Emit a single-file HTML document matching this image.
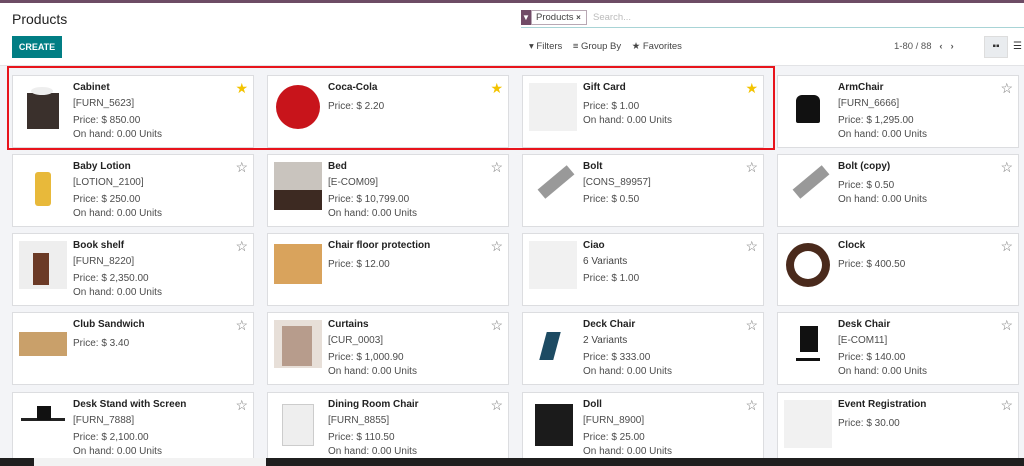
<!DOCTYPE html><html><head><style>
*{margin:0;padding:0;box-sizing:border-box}
body{width:1024px;height:466px;overflow:hidden;background:#f3f4f7;font-family:"Liberation Sans",sans-serif;position:relative;color:#4c4c4c}
.top{position:absolute;left:0;top:0;width:1024px;height:3px;background:#6d4c65}
.hdr{position:absolute;left:0;top:3px;width:1024px;height:63px;background:#fff;border-bottom:1px solid #e2e3e6}
.c{position:absolute;width:242px;height:73px;background:#fff;border:1px solid #dcdde0}
.c .im{position:absolute;left:6px;top:7px;width:48px;height:48px}
.c div.t{position:absolute;left:60px;font-size:10px;white-space:nowrap;line-height:12px}
.c .n{font-weight:bold;color:#222}
.c .v{color:#444}
.st{position:absolute;right:5px;top:5px;font-size:14px;line-height:14px;color:#777}
.st.f{color:#f3c300}
.ph{background:#f1f1f1}
</style></head><body>
<div class="top"></div>
<div class="hdr">
<div style="position:absolute;left:12px;top:8px;font-size:14px;color:#222">Products</div>
<div style="position:absolute;left:12px;top:33px;width:50px;height:22px;background:#017e84;color:#fff;font-size:9px;font-weight:bold;text-align:center;line-height:22px">CREATE</div>
<div style="position:absolute;left:521px;top:7px;width:10px;height:15px;background:#714b67;color:#fff;font-size:8px;text-align:center;line-height:15px">▼</div>
<div style="position:absolute;left:531px;top:7px;width:56px;height:15px;border:1px solid #b8a8b4;font-size:9.5px;line-height:13px;padding-left:4px;color:#444;white-space:nowrap">Products <b style="font-size:8px">×</b></div>
<div style="position:absolute;left:593px;top:9px;font-size:9.5px;color:#bbb">Search...</div>
<div style="position:absolute;left:521px;top:24px;width:503px;height:1px;background:#a8d4d6"></div>
<div style="position:absolute;left:529px;top:38px;font-size:9.5px;color:#444">▾ Filters &nbsp;&nbsp; ≡ Group By &nbsp;&nbsp; ★ Favorites</div>
<div style="position:absolute;left:894px;top:38px;font-size:9.5px;color:#555">1-80 / 88 &nbsp;&nbsp;<b>‹ &nbsp; ›</b></div>
<div style="position:absolute;left:984px;top:33px;width:24px;height:22px;background:#e9ecef;border:1px solid #ddd;font-size:10px;text-align:center;line-height:20px;color:#333">▪▪</div>
<div style="position:absolute;left:1013px;top:38px;font-size:10px;color:#333">☰</div>
</div>

<!-- row 1 -->
<div class="c" style="left:12px;top:75px"><div class="im"><div style="position:absolute;left:8px;top:10px;width:32px;height:36px;background:#3a302c"></div><div style="position:absolute;left:12px;top:4px;width:22px;height:8px;background:#eee;border-radius:50%"></div></div><div class="t n" style="top:6px">Cabinet</div><div class="t" style="top:22px">[FURN_5623]</div><div class="t" style="top:39px">Price: $ 850.00</div><div class="t" style="top:53px">On hand: 0.00 Units</div><div class="st f">★</div></div>
<div class="c" style="left:267px;top:75px"><div class="im"><div style="position:absolute;left:2px;top:2px;width:44px;height:44px;border-radius:50%;background:#c8141b"></div></div><div class="t n" style="top:6px">Coca-Cola</div><div class="t" style="top:25px">Price: $ 2.20</div><div class="st f">★</div></div>
<div class="c" style="left:522px;top:75px"><div class="im ph"></div><div class="t n" style="top:6px">Gift Card</div><div class="t" style="top:25px">Price: $ 1.00</div><div class="t" style="top:39px">On hand: 0.00 Units</div><div class="st f">★</div></div>
<div class="c" style="left:777px;top:75px"><div class="im"><div style="position:absolute;left:12px;top:12px;width:24px;height:28px;background:#111;border-radius:6px 6px 2px 2px"></div></div><div class="t n" style="top:6px">ArmChair</div><div class="t" style="top:22px">[FURN_6666]</div><div class="t" style="top:39px">Price: $ 1,295.00</div><div class="t" style="top:53px">On hand: 0.00 Units</div><div class="st">☆</div></div>
<!-- row 2 -->
<div class="c" style="left:12px;top:154px"><div class="im"><div style="position:absolute;left:16px;top:10px;width:16px;height:34px;background:#e8b93a;border-radius:3px"></div></div><div class="t n" style="top:6px">Baby Lotion</div><div class="t" style="top:22px">[LOTION_2100]</div><div class="t" style="top:39px">Price: $ 250.00</div><div class="t" style="top:53px">On hand: 0.00 Units</div><div class="st">☆</div></div>
<div class="c" style="left:267px;top:154px"><div class="im" style="background:#c9c4be"><div style="position:absolute;left:0;top:28px;width:48px;height:20px;background:#3d2a22"></div></div><div class="t n" style="top:6px">Bed</div><div class="t" style="top:22px">[E-COM09]</div><div class="t" style="top:39px">Price: $ 10,799.00</div><div class="t" style="top:53px">On hand: 0.00 Units</div><div class="st">☆</div></div>
<div class="c" style="left:522px;top:154px"><div class="im"><div style="position:absolute;left:8px;top:14px;width:38px;height:12px;background:#999;transform:rotate(-40deg)"></div></div><div class="t n" style="top:6px">Bolt</div><div class="t" style="top:22px">[CONS_89957]</div><div class="t" style="top:39px">Price: $ 0.50</div><div class="st">☆</div></div>
<div class="c" style="left:777px;top:154px"><div class="im"><div style="position:absolute;left:8px;top:14px;width:38px;height:12px;background:#999;transform:rotate(-40deg)"></div></div><div class="t n" style="top:6px">Bolt (copy)</div><div class="t" style="top:25px">Price: $ 0.50</div><div class="t" style="top:39px">On hand: 0.00 Units</div><div class="st">☆</div></div>
<!-- row 3 -->
<div class="c" style="left:12px;top:233px"><div class="im" style="background:#eee"><div style="position:absolute;left:14px;top:12px;width:16px;height:32px;background:#6b3a26"></div></div><div class="t n" style="top:6px">Book shelf</div><div class="t" style="top:22px">[FURN_8220]</div><div class="t" style="top:39px">Price: $ 2,350.00</div><div class="t" style="top:53px">On hand: 0.00 Units</div><div class="st">☆</div></div>
<div class="c" style="left:267px;top:233px"><div class="im" style="background:#d9a35c;top:10px;height:40px"></div><div class="t n" style="top:6px">Chair floor protection</div><div class="t" style="top:25px">Price: $ 12.00</div><div class="st">☆</div></div>
<div class="c" style="left:522px;top:233px"><div class="im ph"></div><div class="t n" style="top:6px">Ciao</div><div class="t v" style="top:22px">6 Variants</div><div class="t" style="top:39px">Price: $ 1.00</div><div class="st">☆</div></div>
<div class="c" style="left:777px;top:233px"><div class="im"><div style="position:absolute;left:2px;top:2px;width:44px;height:44px;border-radius:50%;background:#4a2a1c"></div><div style="position:absolute;left:10px;top:10px;width:28px;height:28px;border-radius:50%;background:#fff"></div></div><div class="t n" style="top:6px">Clock</div><div class="t" style="top:25px">Price: $ 400.50</div><div class="st">☆</div></div>
<!-- row 4 -->
<div class="c" style="left:12px;top:312px"><div class="im"><div style="position:absolute;left:0;top:12px;width:48px;height:24px;background:#c9a06a"></div></div><div class="t n" style="top:6px">Club Sandwich</div><div class="t" style="top:25px">Price: $ 3.40</div><div class="st">☆</div></div>
<div class="c" style="left:267px;top:312px"><div class="im" style="background:#e7dfd8"><div style="position:absolute;left:8px;top:6px;width:30px;height:40px;background:#b79c8c"></div></div><div class="t n" style="top:6px">Curtains</div><div class="t" style="top:22px">[CUR_0003]</div><div class="t" style="top:39px">Price: $ 1,000.90</div><div class="t" style="top:53px">On hand: 0.00 Units</div><div class="st">☆</div></div>
<div class="c" style="left:522px;top:312px"><div class="im"><div style="position:absolute;left:14px;top:12px;width:14px;height:28px;background:#1d4b63;transform:skew(-15deg)"></div></div><div class="t n" style="top:6px">Deck Chair</div><div class="t v" style="top:22px">2 Variants</div><div class="t" style="top:39px">Price: $ 333.00</div><div class="t" style="top:53px">On hand: 0.00 Units</div><div class="st">☆</div></div>
<div class="c" style="left:777px;top:312px"><div class="im"><div style="position:absolute;left:16px;top:6px;width:18px;height:26px;background:#111"></div><div style="position:absolute;left:12px;top:38px;width:24px;height:3px;background:#111"></div></div><div class="t n" style="top:6px">Desk Chair</div><div class="t" style="top:22px">[E-COM11]</div><div class="t" style="top:39px">Price: $ 140.00</div><div class="t" style="top:53px">On hand: 0.00 Units</div><div class="st">☆</div></div>
<!-- row 5 -->
<div class="c" style="left:12px;top:392px"><div class="im"><div style="position:absolute;left:2px;top:18px;width:44px;height:3px;background:#222"></div><div style="position:absolute;left:18px;top:6px;width:14px;height:14px;background:#111"></div></div><div class="t n" style="top:6px">Desk Stand with Screen</div><div class="t" style="top:22px">[FURN_7888]</div><div class="t" style="top:39px">Price: $ 2,100.00</div><div class="t" style="top:53px">On hand: 0.00 Units</div><div class="st">☆</div></div>
<div class="c" style="left:267px;top:392px"><div class="im"><div style="position:absolute;left:8px;top:4px;width:32px;height:42px;background:#eee;border:1px solid #ccc"></div></div><div class="t n" style="top:6px">Dining Room Chair</div><div class="t" style="top:22px">[FURN_8855]</div><div class="t" style="top:39px">Price: $ 110.50</div><div class="t" style="top:53px">On hand: 0.00 Units</div><div class="st">☆</div></div>
<div class="c" style="left:522px;top:392px"><div class="im"><div style="position:absolute;left:6px;top:4px;width:38px;height:42px;background:#1b1b1b"></div></div><div class="t n" style="top:6px">Doll</div><div class="t" style="top:22px">[FURN_8900]</div><div class="t" style="top:39px">Price: $ 25.00</div><div class="t" style="top:53px">On hand: 0.00 Units</div><div class="st">☆</div></div>
<div class="c" style="left:777px;top:392px"><div class="im ph"></div><div class="t n" style="top:6px">Event Registration</div><div class="t" style="top:25px">Price: $ 30.00</div><div class="st">☆</div></div>

<div style="position:absolute;left:7px;top:66px;width:768px;height:84px;border:2px solid #e8141c"></div>
<div style="position:absolute;left:0;top:458px;width:1024px;height:8px;background:#1f1f1f"></div>
<div style="position:absolute;left:34px;top:458px;width:232px;height:8px;background:#f2f2f2"></div>
</body></html>
